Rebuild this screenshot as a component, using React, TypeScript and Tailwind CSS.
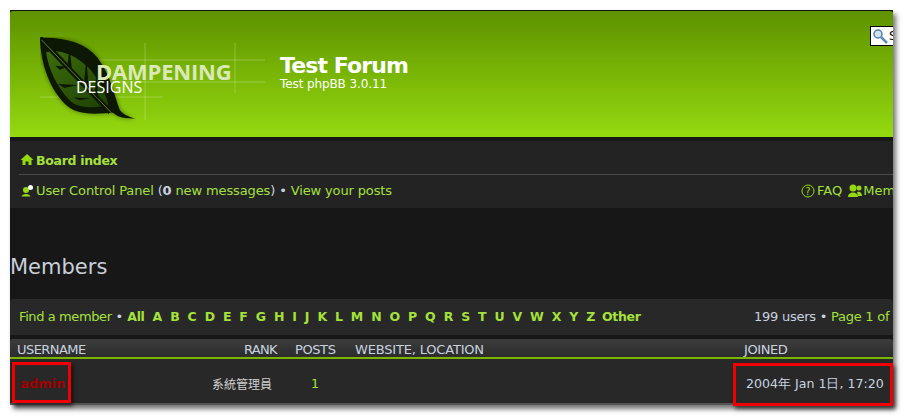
const sans = "font-['DejaVu_Sans',sans-serif]";
const letters = "A B C D E F G H I J K L M N O P Q R S T U V W X Y Z".split(" ");

function Logo() {
  return (
    <div className="relative w-[230px] h-[100px] mt-[26px] ml-[30px] shrink-0">
      <svg width="230" height="100" viewBox="0 0 230 100" className="absolute left-0 top-0">
        <defs>
          <filter id="glow" x="-20%" y="-20%" width="140%" height="140%">
            <feGaussianBlur stdDeviation="2.5" />
          </filter>
          <linearGradient id="leaf" x1="0" y1="0" x2="1" y2="1">
            <stop offset="0" stopColor="#3d6d0a" />
            <stop offset="1" stopColor="#1d3f06" />
          </linearGradient>
        </defs>
        <g stroke="#ffffff" strokeOpacity="0.24" strokeWidth="1" fill="none">
          <path d="M57 23H225M60 45H225M-3 60H123M105 6V83M195 6V56" />
        </g>
        <g transform="scale(0.76 0.96)">
          <path d="M0 1C32 0 60 6 76 22C94 42 98 62 105 76C111 82 121 84 126 85C112 85 103 84 96 79C76 80 50 82 36 72C14 56 1 30 0 1Z" fill="#000" opacity="0.45" filter="url(#glow)" />
          <path d="M0 1C32 0 60 6 76 22C94 42 98 62 105 76C111 82 121 84 126 85C112 85 103 84 96 79C76 80 50 82 36 72C14 56 1 30 0 1Z" fill="#0d1804" />
          <path d="M8 16C24 12 46 18 64 32C78 44 88 62 90 71C70 74 50 75 39 66C24 54 11 34 8 16Z" fill="url(#leaf)" />
          <path d="M0 1L92 78" stroke="#0d1804" strokeWidth="6" />
          <path d="M2 3L94 79" stroke="#6f8a4a" strokeWidth="1" />
          <path d="M36 30L39 11L42 34ZM58 48L61 22L64 52ZM20 30L37 31L26 34ZM24 49L50 50L32 53ZM44 63L66 64L52 66ZM72 60L74 38L77 65Z" fill="#0d1804" />
        </g>
      </svg>
      <span className="absolute left-[56px] top-[21px] text-[22px] leading-[26px] font-bold tracking-[-0.2px] text-[#dbe8b8] font-['Open_Sans',sans-serif]">DAMPENING</span>
      <span className="absolute left-[36px] top-[40px] text-[16px] leading-[20px] text-white font-['Open_Sans',sans-serif]">DESIGNS</span>
    </div>
  );
}

export default function App() {
  return (
    <div className={`w-[904px] h-[416px] bg-white p-[10px] overflow-hidden ${sans}`}>
      <div className="relative w-[883px] h-[395px] bg-[#171717] shadow-[3px_4px_5px_rgba(0,0,0,0.55)]">
        <div className="h-full overflow-hidden">
          <div className="h-[127px] border-t border-[#111] rounded-t-[3px] bg-gradient-to-b from-[#5e9200] to-[#95da10] flex relative">
            <Logo />
            <div className="ml-[10px] pt-[43px] text-white">
              <div className="text-[22px] leading-[24px] font-bold tracking-[-0.9px]">Test Forum</div>
              <div className="text-[12px] leading-[14px] mt-[-1px] tracking-[-0.1px]">Test phpBB 3.0.11</div>
            </div>
            <div className="absolute left-[860px] top-[15px] w-[30px] h-[20px] bg-white border border-black flex items-center pl-[1px] overflow-hidden">
              <svg width="16" height="16" viewBox="0 0 16 16" className="shrink-0">
                <circle cx="6" cy="6" r="4" fill="#cfe2f0" stroke="#4f7fa8" strokeWidth="1.5" />
                <path d="M9 9L15 15" stroke="#5d8fb5" strokeWidth="2.5" />
              </svg>
              <span className="text-[12px] text-black ml-[1px]">Search</span>
            </div>
          </div>
          <div className="h-[4px]" />
          <div className="h-[67px] bg-[#232323] pl-[9px] text-[13px] text-[#a5e13b]">
            <div className="h-[34px] flex items-end pb-[6px] border-b border-[#4a4a4a] font-bold gap-[2px] text-[12.5px] tracking-[-0.3px]">
              <svg width="14" height="13" viewBox="0 0 14 13" className="mb-[2px] ml-[1px]">
                <path d="M7 1L0.5 7H2.5V12H5.5V8.5H8.5V12H11.5V7H13.5Z" fill="#95d90f" />
              </svg>
              <span className="leading-[16px] relative top-[1px]">Board index</span>
            </div>
            <div className="h-[33px] pb-[2px] flex items-center justify-between whitespace-nowrap overflow-hidden">
              <div className="flex items-center gap-[2px] tracking-[-0.13px]">
                <svg width="13" height="13" viewBox="0 0 13 13" className="ml-[2px]">
                  <circle cx="5" cy="6" r="3" fill="#95d90f" />
                  <path d="M0.5 12.5C1 9 9 9 9.5 12.5Z" fill="#95d90f" />
                  <circle cx="9.5" cy="3.5" r="2.5" fill="#fff" />
                </svg>
                <span>User Control Panel <span className="text-[#c9d3e0]">(</span><b className="text-[#c9d3e0]">0</b> new messages<span className="text-[#c9d3e0]">)</span> <span className="text-[#c9d3e0]">•</span> View your posts</span>
              </div>
              <div className="w-[92px] shrink-0 flex items-center gap-[1px] overflow-hidden">
                <svg width="14" height="14" viewBox="0 0 14 14" className="shrink-0">
                  <circle cx="7" cy="7" r="6" fill="none" stroke="#95d90f" />
                  <text x="7" y="10.5" textAnchor="middle" fontSize="10" fill="#95d90f">?</text>
                </svg>
                <span className="ml-[1px]">FAQ</span>
                <svg width="14" height="13" viewBox="0 0 14 13" className="shrink-0 ml-[5px]">
                  <circle cx="5" cy="4" r="3.5" fill="#95d90f" />
                  <circle cx="11" cy="4" r="2.5" fill="#95d90f" />
                  <path d="M0 13C0 7 10 7 10 13ZM9 8C12 7 14 9 14 12H10Z" fill="#95d90f" />
                </svg>
                <span>Members</span>
              </div>
            </div>
          </div>
          <h1 className="h-[91px] pt-[45px] text-[21px] leading-[28px] text-[#c9cfd8] font-normal">Members</h1>
          <div className="h-[36px] bg-[#282828] pl-[9px] text-[13px] text-[#a5e13b] flex items-center justify-between whitespace-nowrap overflow-hidden rounded-t-[3px]">
            <div className="flex items-center">
              <span className="tracking-[-0.4px]">Find a member</span>
              <span className="text-[#c9d3e0] mx-[4px]">•</span>
              <div className="flex font-bold text-[12.5px] tracking-[-0.3px]">
                <b>All</b>
                <div className="flex ml-[8px] gap-[8.2px]">
                  {letters.map((l) => <b key={l}>{l}</b>)}
                </div>
                <b className="ml-[7px]">Other</b>
              </div>
            </div>
            <div className="w-[139px] shrink-0 overflow-hidden tracking-[-0.25px]"><span className="text-[#c9d3e0]">199 users • </span>Page 1 of 8</div>
          </div>
          <div className="h-[4px]" />
          <div className="h-[20px] rounded-t-[3px] bg-gradient-to-b from-[#3c3c3c] to-[#2c2c2c] border-b-2 border-[#7cb500] text-[13px] leading-[16px] pt-[3px] text-[#c9d3e0] flex whitespace-nowrap">
            <div className="w-[234px] pl-[7px] tracking-[-0.55px]">USERNAME</div>
            <div className="w-[51px] tracking-[-0.7px]">RANK</div>
            <div className="w-[60px] tracking-[-0.4px]">POSTS</div>
            <div className="w-[389px] tracking-[-0.18px]">WEBSITE, LOCATION</div>
            <div className="tracking-[-0.4px]">JOINED</div>
          </div>
          <div className="h-[46px] bg-[#282828] border-b-2 border-[#555] pt-[6px] text-[12.6px] flex items-center whitespace-nowrap">
            <b className="w-[202px] pl-[10px] text-[#a00000] text-[13px]">admin</b>
            <div className="w-[99px] text-[12px] text-[#d0d0d0] font-['Noto_Sans_CJK_TC',sans-serif]">系統管理員</div>
            <b className="w-[435px] text-[#a5e13b] font-normal">1</b>
            <div className="text-[#c9d3e0]">2004年 Jan 1日, 17:20</div>
          </div>
        </div>
        <div className="absolute left-[2px] top-[352px] w-[59px] h-[41px] border-[3px] border-[#f00000] shadow-[2px_3px_4px_rgba(0,0,0,0.6)]" />
        <div className="absolute left-[723px] top-[353px] w-[160px] h-[43px] border-[3px] border-[#f00000] shadow-[2px_3px_4px_rgba(0,0,0,0.6)]" />
      </div>
    </div>
  );
}
